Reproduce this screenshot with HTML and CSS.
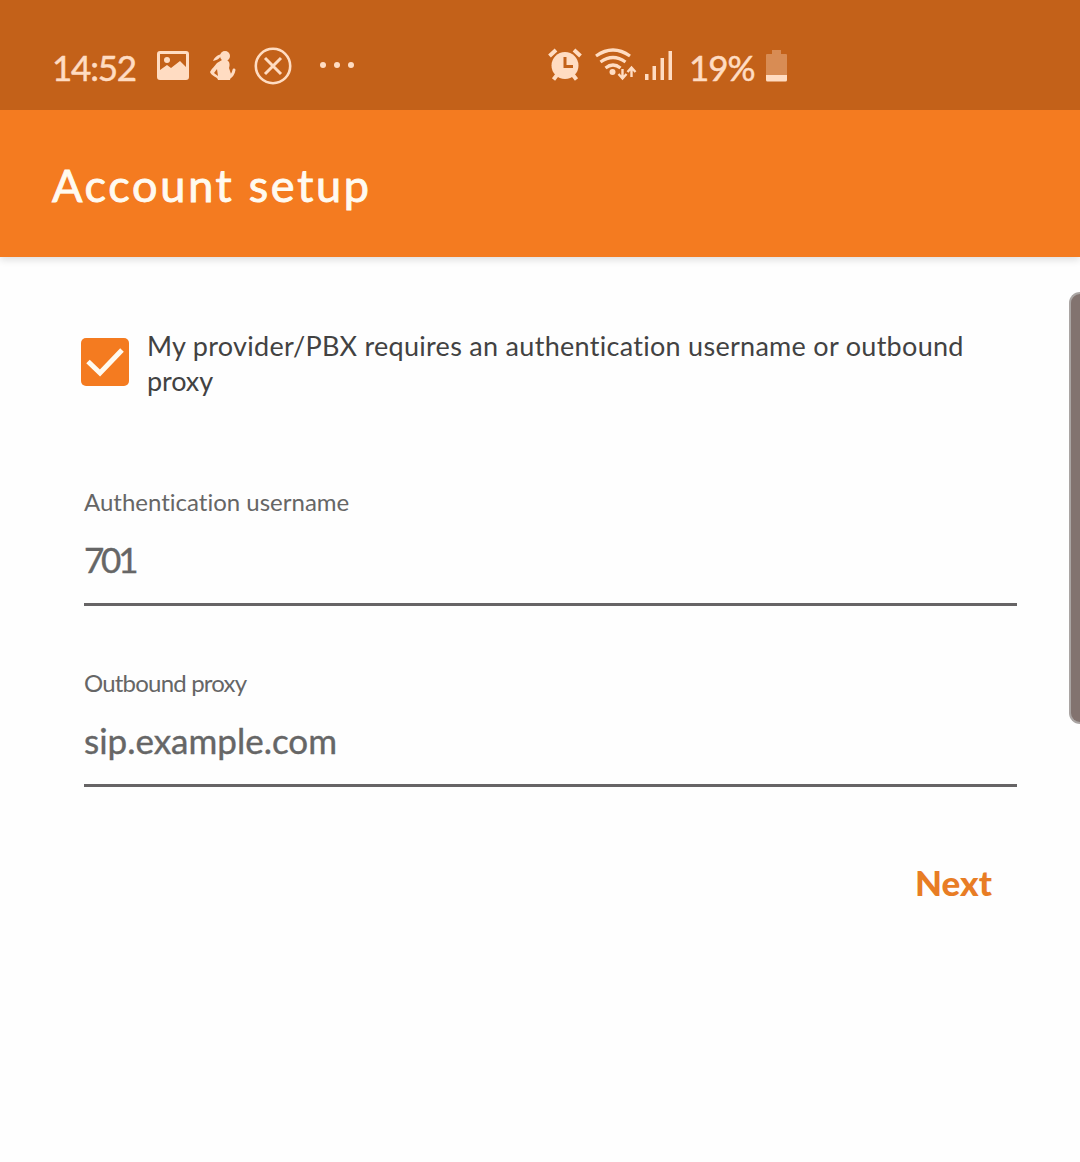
FILE: index.html
```html
<!DOCTYPE html>
<html lang="en">
<head>
<meta charset="utf-8">
<title>Account setup</title>
<link rel="stylesheet" href="styles.css">
</head>
<body>
<div class="status-bar">
  <span class="clock">14:52</span>
  <svg class="notifications" width="210" height="60" viewBox="150 35 210 60" fill="currentColor">
    <path fill-rule="evenodd" d="M160 51h26a3 3 0 0 1 3 3v23a3 3 0 0 1-3 3h-26a3 3 0 0 1-3-3V54a3 3 0 0 1 3-3zm0 3v16l7-5 4 3 9-7 6 6V54z"/>
    <circle cx="167" cy="60" r="3"/>
    <circle cx="225" cy="56" r="5"/>
    <path d="M222 54c-2 4-4 6-9 7 1-3 4-6 9-7zM217 63l5-3h5c3 2 3 5 2 8l2 6-1 6h-12c0-3-7-4-8-8 2-4 5-6 7-9zm0 6-3 4 4 3z"/>
    <path fill="none" stroke="currentColor" stroke-width="3" stroke-linecap="round" d="M228 78q5-2 6-8"/>
    <g fill="none" stroke="currentColor"><circle cx="273" cy="66" r="17.200" stroke-width="2.600"/><path stroke-width="3" d="m265 58 16 16m0-16-16 16"/></g>
    <circle cx="323" cy="65" r="3"/><circle cx="337" cy="65" r="3"/><circle cx="351" cy="65" r="3"/>
  </svg>
  <svg class="signals" width="140" height="60" viewBox="540 35 140 60" fill="currentColor">
    <circle cx="565" cy="65.500" r="13.500"/>
    <path fill="none" stroke="currentColor" stroke-width="4" d="m549.500 56 6.500-6M574 50l6.500 6M557 75l-3.500 4.500M573 75l3.500 4.500"/>
    <path class="cutout" d="M565 57v9.500h8"/>
    <g fill="none" stroke="currentColor" stroke-width="3.200"><path d="M596 56q17-12 34 0M600.500 62q12.500-9 25 0M605.500 68q7.500-6 15 0"/></g>
    <circle cx="612.500" cy="72" r="3"/>
    <path fill="none" stroke="currentColor" stroke-width="2.400" d="M622.500 69v9m-4-4 4 4.500 4-4.500M631.500 77v-9m-4 4 4-4.500 4 4.500"/>
    <path d="M645 74h3.500v6H645zM652.500 66h3.500v14h-3.500zM660.500 58h3.500v22h-3.500zM668.500 51h3.500v29h-3.500z"/>
  </svg>
  <span class="percent">19%</span>
  <svg class="battery" width="24" height="34" viewBox="765 49 24 34" fill="currentColor">
    <path opacity=".35" d="M772 50h9v4h5a1 1 0 0 1 1 1v20h-21V55a1 1 0 0 1 1-1h5z"/><path d="M766 75h21v5a1.500 1.500 0 0 1-1.500 1.500h-18A1.500 1.500 0 0 1 766 80z"/>
  </svg>
</div>
<header class="app-bar"><h1>Account setup</h1></header>
<main class="form">
  <label class="option">
    <svg class="checkbox" width="48" height="48" viewBox="0 0 48 48"><rect width="48" height="48" rx="5" fill="#f47b20"/><path d="M7 23.500l12 11.500 22-23" fill="none" stroke="#fffaf0" stroke-width="5"/></svg>
    <span class="option-text"><span class="first-line">My provider/PBX requires an authentication username or outbound</span> <span class="last-line">proxy</span></span>
  </label>
  <div class="field username"><span class="caption">Authentication username</span><span class="value">701</span></div>
  <div class="field proxy"><span class="caption">Outbound proxy</span><span class="value">sip.example.com</span></div>
  <div class="actions"><button class="next" type="button">Next</button></div>
</main>
<div class="edge-handle"></div>
</body>
</html>
```

FILE: styles.css
```css
* { box-sizing: border-box; }
body { margin: 0; height: 1162px; overflow: hidden; background: #fefefe; color: #424242; font-family: Lato, sans-serif; font-variant-ligatures: none; white-space: nowrap; }
svg { display: block; flex: none; }
.status-bar { position: relative; z-index: 1; height: 110px; padding: 35px 0 0 52px; display: flex; align-items: flex-start; background: #c36119; color: #ffdcc2; font-size: 35px; line-height: 64px; -webkit-text-stroke: .5px; }
.notifications, .signals, .battery { -webkit-text-stroke: 0; }
.clock { width: 98px; letter-spacing: -1.2px; }
.signals { margin-left: 180px; }
.percent { width: 75px; padding-left: 9px; letter-spacing: -1px; }
.battery { margin: 14px 0 0 10px; }
.cutout { fill: none; stroke: #c36119; stroke-width: 3; }
.app-bar { height: 147px; padding: 45px 52px; background: #f47b20; color: #fffaf0; box-shadow: 0 3px 7px #00000020; }
h1 { margin: 0; font-size: 45px; line-height: 60px; font-weight: 400; letter-spacing: 2.7px; -webkit-text-stroke: .9px; }
.form { padding: 71px 63px 0 81px; }
.option { display: flex; gap: 18px; height: 151px; }
.checkbox { margin-top: 10px; }
.option-text { display: flex; flex-direction: column; font-size: 27px; line-height: 35px; }
.first-line { letter-spacing: .29px; }
.last-line { letter-spacing: -.1px; }
.field { display: flex; flex-direction: column; height: 127px; margin: 0 0 54px 3px; border-bottom: 3px solid #666465; color: #666; }
.caption { font-size: 24px; line-height: 46px; letter-spacing: 0; }
.proxy .caption { letter-spacing: -.8px; }
.value { font-size: 35px; line-height: 68px; letter-spacing: 0; -webkit-text-stroke: .4px; }
.username .value { letter-spacing: -3.2px; }
.actions { display: flex; justify-content: flex-end; padding: 10px 26px 0 0; }
.next { width: 76px; padding: 0; border: 0; background: none; color: #e87d25; font: 900 35px/62px Lato, sans-serif; text-align: left; }
.edge-handle { position: absolute; right: 0; top: 292px; width: 11px; height: 432px; border: 2px solid #aaa5a3; border-right: 0; border-radius: 11px 0 0 11px; background: #82736f; }
```
